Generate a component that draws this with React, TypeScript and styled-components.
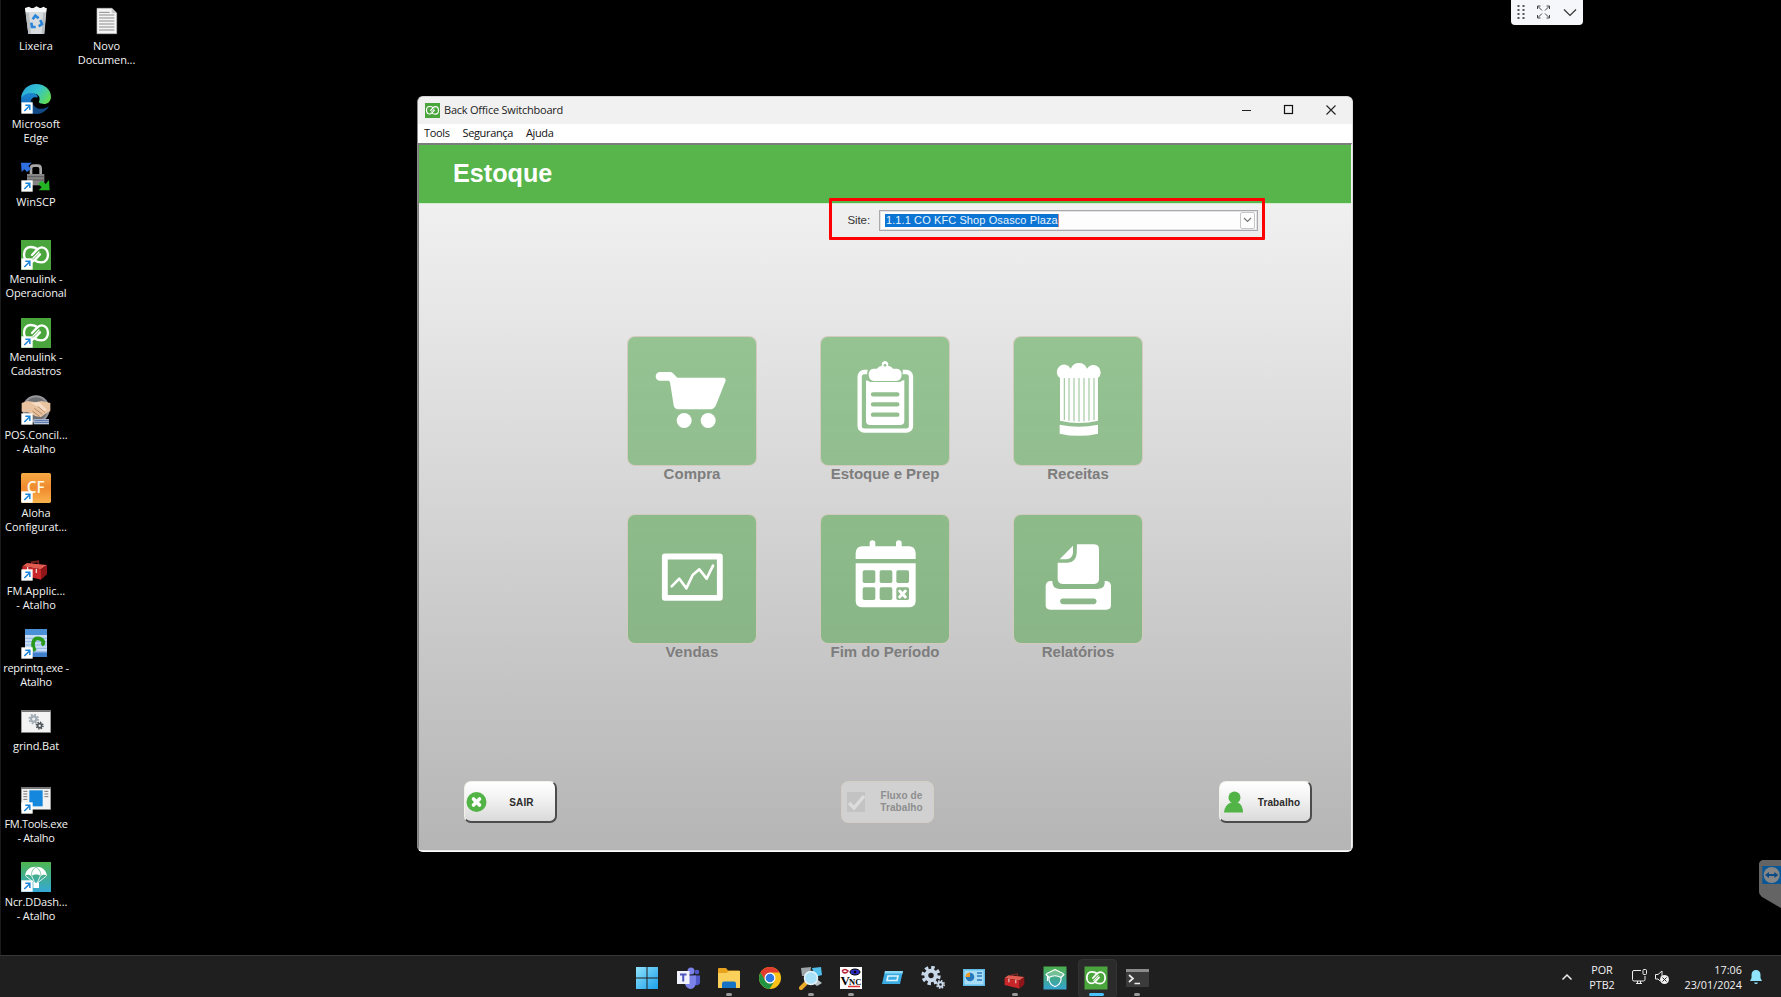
import React from "react";
import styled, { createGlobalStyle } from "styled-components";

const Global = createGlobalStyle`
  * { box-sizing: border-box; }
  html, body { margin: 0; padding: 0; background: #000; }
  body { overflow: hidden; }
`;

const ui = `"Open Sans", "Noto Sans", sans-serif`;
const arial = `"Liberation Sans", Arial, sans-serif`;

const Screen = styled.div`
  width: 1781px; height: 997px; background: #000; position: relative;
  display: flex; flex-direction: column; overflow: hidden; font-family: ${ui};
`;
const Desktop = styled.main`
  flex: 1; min-height: 0; display: flex; align-items: flex-start;
  border-left: 1px solid #1b1b1b;
`;
const IconColumn = styled.div`
  width: 71px; flex: none; display: grid; grid-auto-rows: 77.8px; margin-left: -1px;
  & + & { margin-left: -0.5px; }
`;
const Shortcut = styled.div`
  display: flex; flex-direction: column; align-items: center; padding: 6.4px 0 0 1px;
  svg { display: block; width: 30px; height: 30px; margin-bottom: 2.6px; flex: none; }
`;
const ShortcutLabel = styled.span<{ $ls?: number }>`
  color: #f4f4f4; font-size: 11px; line-height: 14px; white-space: nowrap; text-align: center;
  letter-spacing: ${p => p.$ls ?? 0}px;
`;

/* window */
const Window = styled.section`
  position: absolute; left: 417px; top: 96px; width: 936px; height: 756px;
  display: flex; flex-direction: column; border-radius: 6px; overflow: hidden;
  background: #f1f1f1; border: 1px solid #8a8a8a; border-top-color: #d5d5d5; border-right-color: #dcdcdc; border-bottom-color: #fff;
`;
const TitleBar = styled.header`
  height: 27px; flex: none; display: flex; align-items: center; padding: 0 0 1px 7px; background: #f1f1f1;
`;
const TitleText = styled.span`
  font-size: 11px; color: #1c1c1c; margin-left: 4px; letter-spacing: -0.22px; flex: 1; white-space: nowrap; line-height: 14px;
`;
const WindowButtons = styled.div`
  display: flex; svg { width: 42px; height: 26px; display: block; }
`;
const MenuBar = styled.nav`
  height: 19px; flex: none; background: #fff; display: flex; align-items: center; padding: 0 0 1px 6px; gap: 13px;
  font-size: 11px; color: #111; line-height: 14px; white-space: nowrap; letter-spacing: -0.36px;
`;
const Client = styled.div`
  flex: 1; min-height: 0; display: flex; flex-direction: column;
  border: 1px solid #7d7d7d; border-top: 2px solid #7b7f7b; border-right: 1px solid #f4f4f4; border-bottom: 1px solid #e9e9e9;
  background: linear-gradient(#f0f0f0 59px, #e6e6e6 175px, #b5b5b5);
`;
const Banner = styled.div`
  height: 59px; flex: none; background: #57b54b; border-bottom: 1px solid #d3ecd0;
  padding: 0 0 3px 34px; display: flex; align-items: center;
  h1 { margin: 0; font: bold 25.2px/30px ${arial}; color: #fff; }
`;
const SiteRow = styled.div`
  height: 37px; flex: none; display: flex; align-items: center; padding: 0 93px 5px 0; justify-content: flex-end;
`;
const SiteLabel = styled.label`
  font: 11.5px/14px ${arial}; color: #333; margin-right: 9px; letter-spacing: -0.1px;
`;
const Combo = styled.div`
  width: 379px; height: 21px; background: #fdfdfd; border: 1px solid #a9a9ad; box-shadow: inset 0 0 0 1px #e3e3e6;
  display: flex; align-items: center; justify-content: space-between; padding: 0 2px 0 5px;
`;
const Selected = styled.span`
  background: #0c75d3; color: #e9f3fd; font: 11px/13px ${arial}; letter-spacing: 0.1px; padding: 0 0 0 1px; white-space: nowrap;
  border-right: 1px solid #c88;
`;
const ComboArrow = styled.span`
  width: 15px; height: 17px; border: 1px solid #c6c6c6; border-radius: 2px; display: flex; align-items: center; justify-content: center;
  svg { width: 9px; height: 6px; display: block; }
`;
const Highlight = styled.div`
  position: absolute; left: 829px; top: 198px; width: 436px; height: 42px; border: 3px solid #fe0000; border-radius: 1px;
`;
const TileGrid = styled.div`
  display: grid; grid-template-columns: repeat(3, 130px); column-gap: 63px; grid-auto-rows: 178.2px;
  margin: 95px 0 0 208px; flex: 1;
`;
const TileCell = styled.div`
  display: flex; flex-direction: column; align-items: center;
`;
const Tile = styled.div`
  width: 130px; height: 130px; flex: none; border-radius: 8px; border: 1px solid rgba(216, 205, 196, 0.9);
  background: linear-gradient(rgba(76, 164, 70, .52), rgba(76, 164, 70, .5));
  svg { display: block; width: 129px; height: 129px; margin: -1px 0 0 -0.5px; }
`;
const TileLabel = styled.span<{ $ls: number }>`
  font: bold 15px/18px ${arial}; color: #7d7d7d; letter-spacing: ${p => p.$ls}px; white-space: nowrap; margin-top: -1px;
`;
const Footer = styled.div`
  height: 69px; flex: none; display: flex; justify-content: space-between; padding: 0 39px 0 45px;
`;
const PushButton = styled.button<{ $off?: boolean; $shift?: number }>`
  width: 93px; height: 42px; padding: 0 0 0 1px; display: flex; align-items: center; border-radius: 7px;
  font: bold 10px/11.5px ${arial};
  color: ${p => (p.$off ? "#8e8e8e" : "#2b2b2b")};
  background: ${p => (p.$off ? "#d1d1d1" : "linear-gradient(#fff, #f3f3f3 40%, #dadada)")};
  border: 1px solid ${p => (p.$off ? "#d3cfc4" : "#f3f1ea")};
  ${p => (p.$off ? "margin-left: -1px;" : "border-right: 2px solid #4c4c4c; border-bottom: 2px solid #4c4c4c;")}
  svg { width: 22px; height: 22px; display: block; flex: none; }
  span { flex: 1; text-align: center; letter-spacing: 0.1px; padding: ${p => (p.$off ? "0 0 1px 5px" : `2px 0 0 ${p.$shift ?? 0}px`)}; }
`;

/* overlays */
const RemoteBar = styled.div`
  position: absolute; left: 1511px; top: 0; width: 72px; height: 25px; background: #f6f7fa; border-radius: 0 0 4px 4px;
  svg { display: block; width: 72px; height: 25px; }
`;
const SideTab = styled.div`
  position: absolute; right: 0; top: 860px; width: 22px; height: 48px;
  svg { display: block; width: 22px; height: 48px; }
`;

/* taskbar */
const Taskbar = styled.footer`
  height: 42px; flex: none; background: #1f1f1f; border-top: 1px solid #363636; display: flex; align-items: stretch;
  justify-content: space-between; padding-left: 627px;
`;
const Apps = styled.div`display: flex;`;
const AppButton = styled.div<{ $mark?: "run" | "active" }>`
  width: 40.8px; display: flex; flex-direction: column; align-items: center; position: relative; padding-top: 10px;
  > svg { width: 24px; height: 24px; display: block; position: relative; }
  ${p => p.$mark === "active" && `&::before { content: ""; position: absolute; left: 2px; top: 3px; width: 37px; height: 37px; border-radius: 4px; background: #2b2b2b; border: 1px solid #333; }`}
  ${p => p.$mark && `&::after { content: ""; position: absolute; bottom: 1px; height: 3px; border-radius: 2px;
    width: ${p.$mark === "active" ? 15 : 6}px; background: ${p.$mark === "active" ? "#4cc2ff" : "#9a9a9a"}; }`}
`;
const Tray = styled.div`
  display: flex; align-items: center; color: #f2f2f2; font-size: 10.8px; line-height: 15px; padding-right: 18px;
  svg { display: block; flex: none; }
`;
const TrayText = styled.div<{ $w: number; $right?: boolean }>`
  width: ${p => p.$w}px; text-align: ${p => (p.$right ? "right" : "center")}; white-space: nowrap;
  letter-spacing: ${p => (p.$right ? 0.02 : -0.05)}px; padding-top: 1px;
`;
const BellSlot = styled.div`margin-left: 7px;`;

const Arrow = () => (
  <g>
    <rect x="1" y="55" width="34" height="34" fill="#fff" />
    <path d="M10 81 L26 65 M13 64 H26.500 V78" fill="none" stroke="#1b84d8" strokeWidth="4.500" />
  </g>
);
const Rings = () => (
  <g fill="none" stroke="#fff" strokeLinecap="round">
    <path strokeWidth="7" d="M49 28 C43 22 35 21 28 21 C16 21 9 32 9 44 C9 56 17 66 28 66 C34 66 38 63 42 59 L57 43" />
    <path strokeWidth="7" d="M41 61 C47 66 55 67 62 67 C74 67 81 56 81 44 C81 32 73 22 62 22 C56 22 52 25 48 29 L33 45" />
    <path strokeWidth="4" d="M36 55 L54 36" />
  </g>
);
const Link = ({ arrow }: { arrow?: boolean }) => (
  <svg viewBox="0 0 90 90">
    <rect width="90" height="90" fill="#4aa53c" />
    <Rings />
    {arrow && <Arrow />}
  </svg>
);
const ToolboxShape = () => (
  <g>
    <path d="M32 42 V34 L52 31 V40" fill="none" stroke="#7c2320" strokeWidth="5" />
    <path d="M4 46 L18 36 L78 42 L60 55 Z" fill="#e25b50" />
    <path d="M4 46 L60 55 V86 L4 72 Z" fill="#c9262a" />
    <path d="M60 55 L78 42 V70 L60 86 Z" fill="#8e1518" />
    <path d="M20 48 V62 M46 53 V66" stroke="#e9d3d0" strokeWidth="4" />
  </g>
);

const Bin = () => (
  <svg viewBox="0 0 90 90">
    <path d="M12 6 H77 L70 84 H22 Z" fill="#d9dcde" />
    <path d="M12 6 L24 2 L34 8 L46 1 L58 7 L68 2 L77 8 L75 18 H14 Z" fill="#f4f5f6" />
    <path d="M14 20 L22 84 H30 L24 20 Z M75 20 L69 84 H62 L66 20 Z" fill="#b9bec2" />
    <g fill="none" stroke="#2b86d9" strokeWidth="8">
      <path d="M35 40 L43 29 L53 37" />
      <path d="M58 42 L63 54 L53 61" />
      <path d="M44 63 H33 L31 50" />
    </g>
  </svg>
);
const Doc = () => (
  <svg viewBox="0 0 90 90">
    <path d="M15 7 H60 L74 21 V83 H15 Z" fill="#f4f4f4" stroke="#bbb" strokeWidth="2" />
    <path d="M59 7 V22 H74 Z" fill="#c9c9c9" />
    <path d="M21 19 H53 M21 27 H67 M21 36 H67 M21 45 H67 M21 54 H67 M21 63 H67 M21 72 H67" stroke="#8c8c8c" strokeWidth="3" />
  </svg>
);
const Edge = () => (
  <svg viewBox="0 0 90 90">
    <defs>
      <linearGradient id="eg" x1="0" x2="1" y1="0.2" y2="0.7"><stop offset="0" stopColor="#2aa5dc" /><stop offset=".5" stopColor="#34c3cf" /><stop offset="1" stopColor="#63dc4e" /></linearGradient>
      <linearGradient id="eb" x1="0" x2="0" y1="0" y2="1"><stop offset="0" stopColor="#1a86d2" /><stop offset="1" stopColor="#1557a8" /></linearGradient>
    </defs>
    <path d="M0 44 C2 16 22 0 45 0 C72 0 90 18 90 38 C90 52 80 60 69 60 C58 60 52 56 54 52 C58 45 56 30 40 29 C22 28 6 36 0 44 Z" fill="url(#eg)" />
    <path d="M0 46 C4 32 22 25 36 28 C50 31 52 38 48 41 C38 36 26 46 30 60 C34 76 50 82 66 79 L60 84 C48 92 28 92 14 78 C4 69 0 58 0 46 Z" fill="url(#eb)" />
    <path d="M40 38 C30 46 32 62 46 71 C58 78 74 74 84 66 C78 80 62 90 46 90 C30 84 22 56 40 38 Z" fill="#134a86" />
    <Arrow />
  </svg>
);
const WinScp = () => (
  <svg viewBox="0 0 90 90">
    <path d="M30 40 V20 Q30 11 38 11 H50 Q59 11 59 20 V40" fill="none" stroke="#a7a7a7" strokeWidth="8" />
    <rect x="18" y="36" width="52" height="34" fill="#858585" />
    <path d="M18 44 H70 M18 54 H70" stroke="#5b5b5b" strokeWidth="3" />
    <path d="M0 2 L32 2 L22 12 L30 20 L18 30 L10 22 L2 30 Z" fill="#2f6fe0" />
    <path d="M86 85 H53 L62 76 L52 66 L62 56 L74 66 L84 54 Z" fill="#22b422" />
    <Arrow />
  </svg>
);
const Pos = () => (
  <svg viewBox="0 0 90 90">
    <circle cx="45" cy="42" r="38" fill="#6f7073" stroke="#97989b" strokeWidth="6" />
    <path d="M2 24 L20 18 L45 22 L62 18 L88 24 V48 L74 56 L60 66 L44 64 L22 52 L2 50 Z" fill="#e9c3a0" />
    <path d="M30 24 L54 20 L78 44 L70 52 L48 34 Z" fill="#f6dcc4" />
    <path d="M40 40 L64 58 M34 48 L56 64 M50 34 L72 52" stroke="#a97955" strokeWidth="2.500" />
    <rect x="38" y="72" width="46" height="16" fill="#b8c4d8" />
    <path d="M40 76 H84 M40 82 H84" stroke="#4f6ea6" strokeWidth="3" />
    <Arrow />
  </svg>
);
const Cf = () => (
  <svg viewBox="0 0 90 90">
    <defs><linearGradient id="cf" x1="0" x2="0" y1="0" y2="1"><stop offset="0" stopColor="#f6a944" /><stop offset=".5" stopColor="#ef8a2e" /><stop offset="1" stopColor="#f9b34c" /></linearGradient></defs>
    <rect width="90" height="90" rx="5" fill="url(#cf)" />
    <text x="17" y="60" fill="#fff6e4" fontFamily={ui} fontSize="46" fontWeight="600" textLength="54" lengthAdjust="spacingAndGlyphs">CF</text>
    <Arrow />
  </svg>
);
const FmApp = () => (
  <svg viewBox="0 0 90 90"><ToolboxShape /><Arrow /></svg>
);
const Reprint = () => (
  <svg viewBox="0 0 90 90">
    <rect x="12" y="0" width="66" height="84" fill="#c9def5" />
    <rect x="12" y="0" width="66" height="18" fill="#4b8fd6" />
    <path d="M12 28 H78 M12 38 H78 M12 48 H78 M12 58 H78 M12 68 H78" stroke="#8bb4e4" strokeWidth="3" />
    <rect x="12" y="70" width="66" height="14" fill="#3f7fcb" />
    <path d="M42 66 C30 44 38 28 50 28 C66 28 72 42 62 48" fill="none" stroke="#2a9a1d" strokeWidth="11" />
    <Arrow />
  </svg>
);
const gear = (cx: number, cy: number, r: number, c: string, hole: string) => (
  <g>
    <circle cx={cx} cy={cy} r={r} fill="none" stroke={c} strokeWidth={r * 0.45} strokeDasharray={`${r * 0.42} ${r * 0.365}`} />
    <circle cx={cx} cy={cy} r={r * 0.6} fill={hole} stroke={c} strokeWidth={r * 0.5} />
  </g>
);
const Bat = () => (
  <svg viewBox="0 0 90 90">
    <rect x="1" y="10" width="88" height="66" fill="#f3f3f3" stroke="#999" strokeWidth="2" />
    <rect x="0" y="9" width="90" height="6" fill="#777" />
    {gear(38, 36, 13, "#a3adb6", "#f3f3f3")}
    {gear(56, 56, 10, "#4f565c", "#f3f3f3")}
  </svg>
);
const FmTools = () => (
  <svg viewBox="0 0 90 90">
    <rect x="1" y="10" width="88" height="66" fill="#f3f3f3" stroke="#999" strokeWidth="2" />
    <rect x="0" y="9" width="90" height="6" fill="#777" />
    <path d="M7 22 H19 M7 30 H19 M7 38 H19 M7 46 H19 M70 22 H82 M70 30 H82 M70 38 H82" stroke="#777" strokeWidth="3" />
    <rect x="25" y="19" width="40" height="48" fill="#1587dc" />
    <Arrow />
  </svg>
);
const Dash = () => (
  <svg viewBox="0 0 90 90">
    <defs><linearGradient id="dd" x1="0" x2="0" y1="0" y2="1"><stop offset="0" stopColor="#4fb550" /><stop offset="1" stopColor="#35a8d6" /></linearGradient></defs>
    <rect width="90" height="90" fill="url(#dd)" />
    <path d="M12 42 C14 24 26 14 45 14 C64 14 76 24 78 42 C72 36 64 37 60 43 C54 36 37 36 31 43 C26 37 18 36 12 42 Z" fill="#fff" />
    <path d="M14 42 L42 64 L32 42 M58 42 L48 64 L76 42" fill="none" stroke="#fff" strokeWidth="2.500" />
    <path d="M45 15 C34 22 31 32 31 42 M45 15 C56 22 60 32 60 42" fill="none" stroke="#45aa80" strokeWidth="2" />
    <rect x="37" y="62" width="17" height="16" fill="#fff" />
    <Arrow />
  </svg>
);

const shortcuts: { icon: React.FC; lines: string[]; ls?: number }[] = [
  { icon: Bin, lines: ["Lixeira"] },
  { icon: Edge, lines: ["Microsoft", "Edge"] },
  { icon: WinScp, lines: ["WinSCP"] },
  { icon: () => <Link arrow />, lines: ["Menulink -", "Operacional"], ls: -0.12 },
  { icon: () => <Link arrow />, lines: ["Menulink -", "Cadastros"], ls: -0.12 },
  { icon: Pos, lines: ["POS.Concil...", "- Atalho"], ls: -0.06 },
  { icon: Cf, lines: ["Aloha", "Configurat..."], ls: -0.06 },
  { icon: FmApp, lines: ["FM.Applic...", "- Atalho"] },
  { icon: Reprint, lines: ["reprintq.exe -", "Atalho"], ls: -0.28 },
  { icon: Bat, lines: ["grind.Bat"], ls: -0.08 },
  { icon: FmTools, lines: ["FM.Tools.exe", "- Atalho"], ls: -0.3 },
  { icon: Dash, lines: ["Ncr.DDash...", "- Atalho"], ls: -0.1 },
];

const green = "#93bf8f";
const tiles = [
  {
    name: "Compra", ls: 0.02, box: "52 48 387 387",
    art: (<g fill="#fff">
      <path d="M148 156 H178 Q183 156 187 160 L200 173 H340 Q346 174 345 182 L316 255 Q311 267 300 268 H202 Q191 267 189 256 L178 186 L174 182 H148 A13 13 0 0 1 148 156 Z" />
      <circle cx="220.500" cy="301.500" r="22.500" /><circle cx="292.500" cy="301.500" r="22.500" />
    </g>),
  },
  {
    name: "Estoque e Prep", ls: -0.04, box: "631 48 387 387",
    art: (<g>
      <rect x="747" y="156" width="154" height="176" rx="14" fill="none" stroke="#fff" strokeWidth="13" />
      <path d="M772 142 H876 V172 Q876 186 862 186 H786 Q768 186 768 172 Z" fill="#95c192" />
      <path d="M766 182 Q772 180 778 186 H868 Q874 182 881 180 V302 Q881 315 868 315 H779 Q766 315 766 302 Z" fill="#fff" />
      <path d="M788 146 H799 Q803 138 814 137 A10 10 0 1 1 832 137 Q843 138 847 146 H858 Q873 148 873 163 Q873 183 856 183 H790 Q774 182 774 163 Q775 148 788 146 Z" fill="#fff" />
      <circle cx="823" cy="136" r="4" fill="#95c192" />
      <path d="M787 223 H860 M787 253 H860 M787 284 H860" stroke={green} strokeWidth="13" strokeLinecap="round" />
    </g>),
  },
  {
    name: "Receitas", ls: -0.04, box: "161 48 387 387",
    art: (<g>
      <path d="M299 174 A22 22 0 1 1 331 146 Q338 129 356 129 Q374 129 380 146 A22 22 0 1 1 413 174 V302 Q356 316 299 302 Z" fill="#fff" />
      <path d="M298 314 Q356 326 413 314 V341 Q356 354 298 341 Z" fill="#fff" />
      <path d="M312 174 V300 M326 174 V302 M341 174 V304 M356 174 V305 M371 174 V304 M386 174 V302 M401 174 V300" stroke="#a2caa0" strokeWidth="3.500" />
    </g>),
  },
  {
    name: "Vendas", ls: 0.05, box: "52 583 387 387",
    art: (<g fill="none" stroke="#fff">
      <rect x="162.500" y="710.500" width="165" height="124" strokeWidth="17.500" strokeLinejoin="round" />
      <path d="M183 800 L206 777 L227 806 L246 766 L266 749 L288 777 L307 738" strokeWidth="8" strokeLinecap="round" strokeLinejoin="round" />
    </g>),
  },
  {
    name: "Fim do Período", ls: -0.02, box: "631 583 387 387",
    art: (<g fill="#fff">
      <path d="M735 718 V700 Q736 681 755 680 H777 V670 A8.500 8.500 0 0 1 794 670 V680 H856 V670 A8.500 8.500 0 0 1 873 670 V680 H895 Q914 681 915 700 V718 Z" />
      <path d="M735 731 H915 V845 Q914 862 897 863 H753 Q736 862 735 845 Z" />
      {[[756, 752], [807, 752], [857, 752], [756, 803], [807, 803], [857, 803]].map(([x, y]) => (
        <rect key={`${x}-${y}`} x={x} y={y} width="38" height="38" rx="5" fill="#8db98a" />
      ))}
      <path d="M867 814 L884 832 M884 814 L867 832" stroke="#fff" strokeWidth="9" strokeLinecap="round" />
    </g>),
  },
  {
    name: "Relatórios", ls: -0.1, box: "161 583 387 387",
    art: (<g fill="#fff">
      <path d="M350 674 H402 Q416 675 416 688 V778 Q416 792 402 793 H306 Q293 792 292 778 V729 H322 Q347 727 349 702 Z" />
      <path d="M338 678 V698 Q337 718 318 719 H298 Z" />
      <path d="M276 784 Q257 782 256 799 V856 Q256 870 270 870 H438 Q452 870 452 856 V799 Q451 783 433 784 Q436 807 412 808 H297 Q275 807 276 784 Z" />
      <path d="M308 845 H400" stroke="#8cb889" strokeWidth="17" strokeLinecap="round" />
    </g>),
  },
];

const WinLogo = () => (
  <svg viewBox="0 0 24 24"><defs><linearGradient id="wl" x1="0" y1="0" x2="1" y2="1"><stop offset="0" stopColor="#8fe3fb" /><stop offset="1" stopColor="#1b9fec" /></linearGradient></defs>
    <path d="M1 1H11.500V11.500H1ZM12.500 1H23V11.500H12.500ZM1 12.500H11.500V23H1ZM12.500 12.500H23V23H12.500Z" fill="url(#wl)" /></svg>
);
const Teams = () => (
  <svg viewBox="0 0 24 24"><circle cx="15" cy="5" r="3.500" fill="#7b83eb" /><circle cx="21" cy="6" r="2.300" fill="#5059c9" />
    <path d="M17 9.500H24V17Q23 20 19 19Z" fill="#5059c9" /><path d="M9 9.500H20V17Q19 23 14 23Q10 22 9 18Z" fill="#7b83eb" />
    <rect x="1" y="5" width="12.500" height="13" fill="#f1f2fb" /><path d="M4 8.500H10.500M7.250 8.500V15.500" stroke="#4b53bc" strokeWidth="2" /></svg>
);
const Folder = () => (
  <svg viewBox="0 0 24 24"><path d="M1 3Q1 2 2 2H9L11 4.500H22Q23 4.500 23 6V21Q23 22 22 22H2Q1 22 1 21Z" fill="#e8a21c" /><path d="M1 7L9.500 7L12 5H23V21Q23 22 22 22H2Q1 22 1 21Z" fill="#fbd05a" />
    <path d="M5 22V17.500Q5 15.500 7 15.500H17Q19 15.500 19 17.500V22Z" fill="#1672c4" /></svg>
);
const Chrome = () => (
  <svg viewBox="0 0 24 24"><circle cx="12" cy="12" r="11" fill="#fbc116" /><path d="M2.500 6.500A11 11 0 0 1 21.500 6.500H12L7.200 14.800Z" fill="#e33b2e" /><path d="M2.500 6.500L7.250 14.750Q9 17.500 12 17.500L16 16L11.500 23A11 11 0 0 1 2.500 6.500Z" fill="#229342" />
    <circle cx="12" cy="12" r="5.500" fill="#fff" /><circle cx="12" cy="12" r="4.300" fill="#2f77e5" /></svg>
);
const Search = () => (
  <svg viewBox="0 0 24 24"><path d="M2 2L12 1L11 10L3 10Z" fill="#9da5a9" /><path d="M13 2L22 1L23 9L16 11Z" fill="#51bfe9" /><path d="M14 17L19 14L23 17L18 20Z" fill="#b9c3c8" />
    <path d="M2 22L7 17" stroke="#eaa92b" strokeWidth="4" strokeLinecap="round" /><circle cx="12" cy="12" r="6.500" fill="#a9e2f8" stroke="#e3f3fa" strokeWidth="1.500" /></svg>
);
const Vnc = () => (
  <svg viewBox="0 0 24 24"><rect x="1" y="1" width="22" height="22" fill="#fff" />
    <text x="1.500" y="18.500" fontFamily="Liberation Serif, serif" fontWeight="700" fontSize="13">V</text>
    <text x="10" y="18.500" fontFamily="Liberation Serif, serif" fontWeight="700" fontSize="8.500">NC</text>
    <ellipse cx="16" cy="6" rx="5" ry="3" fill="#2b2bc0" stroke="#000" /><circle cx="16" cy="6" r="1.300" fill="#000" /><path d="M3 5Q6 2 9 5Q6 9 3 5" fill="none" stroke="#b21f2d" strokeWidth="1.500" /><path d="M9 20.500H21" stroke="#d33" strokeWidth="1.500" /></svg>
);
const RunBox = () => (
  <svg viewBox="0 0 24 24"><path d="M5 5H23L20 18H2Z" fill="#3aace2" /><path d="M5 5H23L22.500 7.500H4.500Z" fill="#8ad9f5" /><path d="M8 10H18L17 14.500H7Z" fill="none" stroke="#dff5fd" strokeWidth="1.600" /></svg>
);
const Gears = () => <svg viewBox="0 0 24 24">{gear(10, 9.500, 7.900, "#c9d9ea", "#1f1f1f")}{gear(19.500, 18.500, 3.700, "#c9d9ea", "#1f1f1f")}</svg>;
const Panel = () => (
  <svg viewBox="0 0 24 24"><rect x="1" y="3" width="22" height="17" fill="#5fbdea" /><rect x="2.500" y="4.500" width="19" height="14" fill="#a9dcf5" /><circle cx="8" cy="11" r="4.300" fill="#2878bd" /><path d="M8 11V6.500A4.500 4.500 0 0 0 3.500 11Z" fill="#f29b23" />
    <path d="M15 7H20M15 10H20M15 14H20" stroke="#2878bd" strokeWidth="1.500" /></svg>
);
const Toolbox = () => <svg viewBox="0 0 90 90"><g transform="translate(2,-1)"><ToolboxShape /></g></svg>;
const Chef = () => (
  <svg viewBox="0 0 24 24"><defs><linearGradient id="ch" x1="0" x2="0" y1="0" y2="1"><stop offset="0" stopColor="#4cae4a" /><stop offset="1" stopColor="#35a3cf" /></linearGradient></defs>
    <rect x=".5" y=".5" width="23" height="23" fill="url(#ch)" />
    <path d="M3 8.500Q4 7 7 6L12 3.500L17 6Q20 7 21 8.500L18 11.500Q12 8 6 11.500Z" fill="rgba(255,255,255,.25)" stroke="#fff" strokeWidth="1.200" strokeLinejoin="round" />
    <path d="M6 11.500V14Q7 19 12 20.500Q17 19 18 14V11.500M4.500 10V15" fill="none" stroke="#fff" strokeWidth="1.200" /></svg>
);
const LinkTask = () => <svg viewBox="-2 -2 94 94"><rect width="90" height="90" fill="#4aa53c" /><Rings /></svg>;
const Term = () => (
  <svg viewBox="0 0 24 24"><rect x="1" y="3" width="23" height="18" rx="1" fill="#3b3b3b" /><rect x="1" y="3" width="23" height="3" fill="#8c8c8c" /><path d="M4 9L8 12.500L4 16M9.500 17.500H15" fill="none" stroke="#eee" strokeWidth="1.700" /></svg>
);

const apps: [React.FC, ("run" | "active")?][] = [
  [WinLogo], [Teams], [Folder, "run"], [Chrome], [Search, "run"], [Vnc, "run"], [RunBox], [Gears], [Panel], [Toolbox, "run"], [Chef], [LinkTask, "active"], [Term, "run"],
];

export default function App() {
  return (
    <Screen>
      <Global />
      <Desktop>
        <IconColumn>
          {shortcuts.map(({ icon: I, lines, ls }, i) => (
            <Shortcut key={i}><I />{lines.map(l => <ShortcutLabel key={l} $ls={ls}>{l}</ShortcutLabel>)}</Shortcut>
          ))}
        </IconColumn>
        <IconColumn>
          <Shortcut><Doc /><ShortcutLabel>Novo</ShortcutLabel><ShortcutLabel $ls={-0.1}>Documen...</ShortcutLabel></Shortcut>
        </IconColumn>
      </Desktop>

      <Window>
        <TitleBar>
          <svg width="15" height="15" viewBox="0 0 90 90"><rect width="90" height="90" fill="#4aa53c" /><Rings /></svg>
          <TitleText>Back Office Switchboard</TitleText>
          <WindowButtons>
            <svg viewBox="0 0 42 26"><path d="M16 13.500H25" stroke="#222" /></svg>
            <svg viewBox="0 0 42 26"><rect x="16.500" y="8.500" width="8" height="8" fill="none" stroke="#111" strokeWidth="1.200" /></svg>
            <svg viewBox="0 0 42 26"><path d="M16.500 8.500L25.500 17.500M25.500 8.500L16.500 17.500" stroke="#222" strokeWidth="1.100" /></svg>
          </WindowButtons>
        </TitleBar>
        <MenuBar><span>Tools</span><span>Segurança</span><span>Ajuda</span></MenuBar>
        <Client>
          <Banner><h1>Estoque</h1></Banner>
          <SiteRow>
            <SiteLabel>Site:</SiteLabel>
            <Combo>
              <Selected>1.1.1 CO KFC Shop Osasco Plaza</Selected>
              <ComboArrow><svg viewBox="0 0 9 6"><path d="M1 1L4.500 4.500L8 1" fill="none" stroke="#777" strokeWidth="1.200" /></svg></ComboArrow>
            </Combo>
          </SiteRow>
          <TileGrid>
            {tiles.map(t => (
              <TileCell key={t.name}>
                <Tile><svg viewBox={t.box}>{t.art}</svg></Tile>
                <TileLabel $ls={t.ls}>{t.name}</TileLabel>
              </TileCell>
            ))}
          </TileGrid>
          <Footer>
            <PushButton>
              <svg viewBox="0 0 22 22"><circle cx="10.500" cy="11" r="10" fill="#52b447" /><path d="M7.500 8L13.500 14M13.500 8L7.500 14" stroke="#fff" strokeWidth="3.600" strokeLinecap="round" /></svg>
              <span>SAIR</span>
            </PushButton>
            <PushButton $off>
              <svg viewBox="0 0 22 22"><rect x="4" y="1" width="18" height="20" fill="#c3c3c3" /><path d="M6 12L11 17L21 5" fill="none" stroke="#dcdcdc" strokeWidth="3.500" /></svg>
              <span>Fluxo de<br />Trabalho</span>
            </PushButton>
            <PushButton $shift={5}>
              <svg viewBox="0 0 22 22"><circle cx="13.500" cy="6.500" r="6" fill="#52b447" /><path d="M3 21.500Q3.500 14 10 11.500H17Q22 14 22 21.500Z" fill="#52b447" /></svg>
              <span>Trabalho</span>
            </PushButton>
          </Footer>
        </Client>
      </Window>
      <Highlight />

      <RemoteBar>
        <svg viewBox="0 0 72 25">
          <g fill="#555">{[6, 10, 14, 18].map(y => [6.500, 11.500].map(x => <rect key={`${x}-${y}`} x={x} y={y - 1} width="2" height="2" />))}</g>
          <path d="M26.500 9V6H29.500M35.500 6H38.500V9M38.500 15V18H35.500M29.500 18H26.500V15M27 6.500L31 10.500M38 6.500L34 10.500M27 17.500L31 13.500M38 17.500L34 13.500" fill="none" stroke="#444" />
          <path d="M53 9.500L59 15.500L65 9.500" fill="none" stroke="#333" strokeWidth="1.200" />
        </svg>
      </RemoteBar>
      <SideTab>
        <svg viewBox="0 0 66 144">
          <path d="M10 0H66V144L8 110Q0 104 0 96V10Q2 2 10 0Z" fill="#646464" />
          <rect x="10" y="18" width="56" height="54" fill="#0a5797" /><circle cx="38" cy="45" r="24" fill="#868686" />
          <path d="M18 45L30 36V42H46V36L58 45L46 54V48H30V54Z" fill="#0a4a85" />
        </svg>
      </SideTab>

      <Taskbar>
        <Apps>{apps.map(([I, m], i) => <AppButton key={i} $mark={m}><I /></AppButton>)}</Apps>
        <Tray>
          <svg width="12" height="8" viewBox="0 0 12 8"><path d="M1.500 6.500L6 2L10.500 6.500" fill="none" stroke="#eee" strokeWidth="1.500" /></svg>
          <TrayText $w={58}>POR<br />PTB2</TrayText>
          <svg width="17" height="17" viewBox="0 0 17 17"><path d="M10 2.500H3Q1.500 2.500 1.500 4V11.500Q1.500 13 3 13H12.500Q14 13 14 11.500V8M5 15.500H11M6.500 13V15.500M9.500 13V15.500" fill="none" stroke="#eee" /><rect x="12" y="1.500" width="3.500" height="5" rx="1" fill="none" stroke="#eee" /></svg>
          <svg width="26" height="17" viewBox="0 0 26 17"><path d="M7.500 6.500H10L14 3V8M7.500 6.500V11H10L12 13" fill="none" stroke="#eee" /><circle cx="16.500" cy="11.500" r="4.500" fill="#eee" /><path d="M14.500 9.500L18.500 13.500M18.500 9.500L14.500 13.500" stroke="#222" /></svg>
          <TrayText $w={68} $right>17:06<br />23/01/2024</TrayText>
          <BellSlot>
            <svg width="14" height="16" viewBox="0 0 14 16"><path d="M1 12L2.500 9V5.500Q3 1 7 1Q11 1 11.500 5.500V9L13 12Z" fill="#8fe4fb" /><path d="M5 13.500H9Q8.500 15 7 15Q5.500 15 5 13.500Z" fill="#8fe4fb" /></svg>
          </BellSlot>
        </Tray>
      </Taskbar>
    </Screen>
  );
}
